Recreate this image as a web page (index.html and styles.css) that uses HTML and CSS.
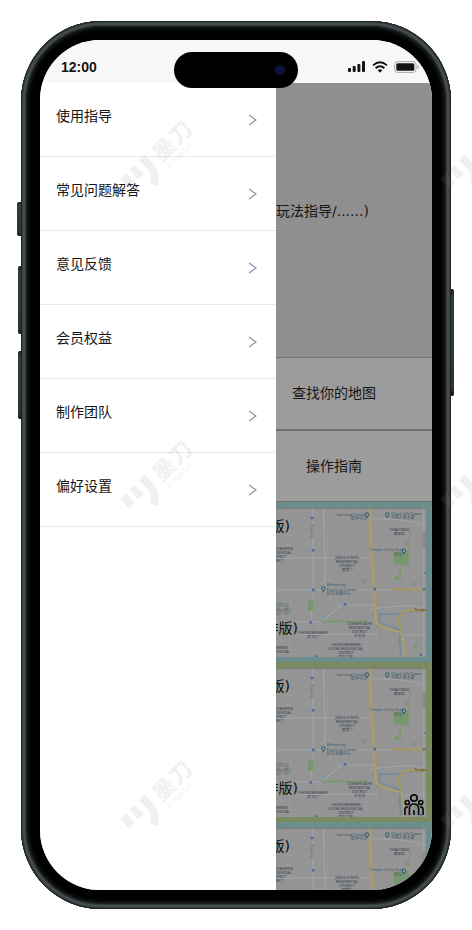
FILE: index.html
```html
<!DOCTYPE html>
<html lang="zh-CN">
<head>
<meta charset="utf-8">
<meta name="viewport" content="width=device-width, initial-scale=1">
<title>使用指导</title>
<link rel="stylesheet" href="styles.css">
</head>
<body>
<svg class="defs" aria-hidden="true">
  <defs>
    <symbol id="chevron" viewBox="0 0 9 12"><path d="M1 1l7 5-7 5" fill="none" stroke="#8496a6" stroke-width="1.2"/></symbol>
    <symbol id="pin" viewBox="0 0 14 19"><path d="M7 0a7 7 0 0 0-7 7c0 5 5 6 7 12 2-6 7-7 7-12a7 7 0 0 0-7-7z" fill="#40687c"/><circle cx="7" cy="7" r="3" fill="#a3aaad"/></symbol>
    <symbol id="map" viewBox="18 38 450 448">
      <rect x="18" y="38" width="450" height="448" fill="#949494"/>
      <path d="M18 38h450v3H18z" fill="#7d7d7d"/>
      <g fill="none" stroke="#9c9c9f" stroke-width="2">
        <path d="M58 40v446M88 40l6 446M175 60l-8 180M220 40v140M250 100v180M266 40v60M18 120h110M128 98h175M18 150h112M18 240h112M130 222h90M18 330h207M225 310h90M250 245h60M180 250v70M202 240v90M345 40v180M372 90h90M385 210h80M350 240h115M430 60v150M325 110h70M340 322h60M345 290v120M420 290v60M18 440h300M145 380v106M180 390v96M260 400v86M290 430v56M320 400v86M60 395v90M415 420h53M430 400v86M345 435h45M18 465h100M410 465h58"/>
      </g>
      <g fill="none" stroke="#a2a2a6" stroke-width="4">
        <path d="M127 40l3 250-8 100M18 188h286M18 284h350M155 380l45-38q12-12 25-12h90M145 380H18M310 70q80-2 158 18M160 40l6 230M462 40v446M300 345q90-20 168-8M18 418h305M400 420h68"/>
      </g>
      <path d="M325 358q20-10 60 8 30 25-4 80l-14 20" fill="none" stroke="#829080" stroke-width="2"/>
      <g fill="#789770">
        <path d="M372 172l45-6v42l-22 5-23-8zM408 140l10-2v16l-10-3zM386 222l9-3-2 22-5-2zM375 242l20 6v7l-22-2zM427 262l16 2-2 6h-14zM279 252h9v12h-9zM113 315l17-2v34h-16zM432 449h9v12h-9zM153 376h140v6H158zM54 340h6v16h-6z"/>
      </g>
      <g fill="none" stroke="#6e8ba2" stroke-width="5" stroke-linejoin="round"><path d="M329 380v-22q55 2 100-10l39-2M328 382l55 20q10 8 6 34l4 46"/></g>
      <circle cx="380" cy="206" r="4" fill="#6995ad"/>
      <g fill="none" stroke="#a8965a" stroke-width="6" stroke-linejoin="round">
        <path d="M301 40q0 120 9 200 2 80 9 140 5 12 25 18l48 14q9 6 9 74M468 346h-44q-34 2-37 26 0 18 6 40M367 282h97"/>
      </g>
      <g fill="none" stroke="#b8a466" stroke-width="3"><path d="M301 40q0 120 9 200 2 80 9 140 5 12 25 18l48 14q9 6 9 74"/></g>
      <g fill="#466f9e">
        <path d="M122 64h8v8h-8zM125 161h8v8h-8zM126 280h8v8h-8zM221 324h8v8h-8zM118 378h8v8h-8zM310 278h8v8h-8zM459 279h7v7h-7zM462 231h5v5h-5zM136 481h8v5h-8zM450 477h7v7h-7z"/>
      </g>
      <path d="M157 360h11v10h-11z" fill="#62a0b4"/>
      <use href="#pin" x="284" y="51" width="14" height="19"/>
      <use href="#pin" x="345" y="51" width="14" height="19"/>
      <use href="#pin" x="395" y="160" width="14" height="19"/>
      <use href="#pin" x="153" y="273" width="14" height="19"/>
      <g class="map-place">
        <text x="200" y="61">Kaiheng Center</text><text x="243" y="73">凯恒中心</text>
        <text x="363" y="60">China Life Tower</text><text x="363" y="72">中国人寿大厦</text>
        <text x="298" y="168">Temple of the Sun</text><text x="372" y="181">日坛</text>
        <text x="170" y="274">Minsheng</text><text x="170" y="287">Financial Center</text><text x="170" y="299">民生金融中心</text>
      </g>
      <g class="map-area">
        <text x="389" y="106">CHAOYANG</text><text x="388" y="118">朝阳区</text>
        <text x="231" y="192">JIANGUOMEN</text><text x="231" y="204">RESIDENTIAL</text><text x="231" y="216">DISTRICT</text><text x="231" y="228">建国门</text>
        <text x="30" y="165">CHAOYANMEN</text><text x="30" y="177">RESIDENTIAL</text><text x="26" y="189">DISTRICT</text><text x="22" y="201">朝阳门</text>
        <text x="128" y="417">CHONGWENMEN</text><text x="128" y="430">崇文门</text>
        <text x="269" y="391">DONGHUASHI</text><text x="269" y="403">RESIDENTIAL</text><text x="269" y="415">DISTRICT</text><text x="269" y="427">东花市</text>
        <text x="227" y="453">CHONGWENMEN</text><text x="227" y="465">OUTER RESIDENTIAL</text><text x="227" y="477">DISTRICT</text><text x="227" y="489">崇文门外</text>
        <text x="26" y="463">QIANMEN</text><text x="26" y="475">RESIDENTIAL</text>
      </g>
      <text class="map-road" x="434" y="349">Tonghui</text>
      <text class="map-street" transform="translate(124 85) rotate(90)">Chaoyang</text>
      <text class="map-street" transform="translate(460 110) rotate(90)">Dongdaqiao</text>
      <text class="map-city" x="56" y="336">Beijing</text><text class="map-city" x="56" y="356">北京市</text>
    </symbol>
    <pattern id="watermark" width="320" height="320" patternUnits="userSpaceOnUse">
      <g transform="translate(0 100)" fill="#808080">
        <path transform="scale(.33333)" d="M361 236l17-16 27 27-18 18zM388 209l16-14 28 26-17 17zM416 181l17-17 24 24q28 29 14 71l-21-8q9-29-11-48z"/>
        <g transform="translate(163 50) rotate(-45)"><text class="wm-name" x="-10" y="8">墨</text><text class="wm-name" x="14" y="8">刀</text></g>
        <text class="wm-site" transform="translate(169 69) rotate(-43)">MODAO.CC</text>
      </g>
    </pattern>
  </defs>
</svg>

<div class="phone">
  <span class="key key-action"></span>
  <span class="key key-up"></span>
  <span class="key key-down"></span>
  <span class="key key-power"></span>

  <div class="screen">
    <header class="status">
      <span class="time">12:00</span>
      <svg width="18" height="11" viewBox="0 0 18 11" fill="#141414" aria-hidden="true"><rect x="0" y="7" width="3" height="4" rx="1"/><rect x="4.700" y="5" width="3" height="6" rx="1"/><rect x="9.400" y="3" width="3" height="8" rx="1"/><rect x="14" y="0" width="3" height="11" rx="1"/></svg>
      <svg width="16" height="12" viewBox="0 0 16 12" fill="none" stroke="#141414" stroke-width="1.9" aria-hidden="true"><path d="M1 4.400q7-6.200 14 0M3.600 7.200q4.400-4 8.800 0"/><path d="M5.700 9.300Q8 7.300 10.300 9.300L8 11.700z" fill="#141414" stroke="none"/></svg>
      <svg width="25" height="12" viewBox="0 0 25 12" aria-hidden="true"><rect x=".6" y=".6" width="21.500" height="10.800" rx="3" fill="none" stroke="#a8a8a8"/><rect x="2.300" y="2.300" width="18" height="7.400" rx="1.500" fill="#141414"/><path d="M23.500 4v4q1.300-.6 1.300-2t-1.300-2z" fill="#a8a8a8"/></svg>
    </header>

    <div class="stage">
      <main class="page">
        <section class="hero"><p>玩法指导/......)</p></section>
        <div class="actions">
          <button type="button">查找你的地图</button>
          <button type="button">操作指南</button>
        </div>
        <article class="card teal">
          <svg class="map" aria-hidden="true"><use href="#map"/></svg>
          <div class="captions"><span>版)</span><span class="wide">作版)</span></div>
        </article>
        <article class="card green">
          <svg class="map" aria-hidden="true"><use href="#map"/></svg>
          <div class="captions"><span>版)</span><span class="wide">作版)</span></div>
          <svg class="people" viewBox="0 0 20 21" fill="none" stroke="#0c0c0c" stroke-width="1.7" aria-hidden="true"><circle cx="10" cy="4" r="3.200"/><circle cx="3.200" cy="8.500" r="2"/><circle cx="16.800" cy="8.500" r="2"/><path d="M5.400 21v-6.500Q5.400 10 10 10t4.600 4.500V21M10 16v5M.9 21v-5.500Q.9 13 3.800 12.800M19.100 21v-5.500Q19.100 13 16.200 12.800"/></svg>
        </article>
        <article class="card teal">
          <svg class="map" aria-hidden="true"><use href="#map"/></svg>
          <div class="captions"><span>版)</span></div>
        </article>
      </main>

      <nav class="drawer">
        <a href="#"><span>使用指导</span><svg><use href="#chevron"/></svg></a>
        <a href="#"><span>常见问题解答</span><svg><use href="#chevron"/></svg></a>
        <a href="#"><span>意见反馈</span><svg><use href="#chevron"/></svg></a>
        <a href="#"><span>会员权益</span><svg><use href="#chevron"/></svg></a>
        <a href="#"><span>制作团队</span><svg><use href="#chevron"/></svg></a>
        <a href="#"><span>偏好设置</span><svg><use href="#chevron"/></svg></a>
      </nav>
    </div>
    <div class="island"><span class="camera"></span></div>
  </div>
</div>

<svg class="watermark" aria-hidden="true"><rect width="100%" height="100%" fill="url(#watermark)"/></svg>
</body>
</html>
```

FILE: styles.css
```css
* { box-sizing: border-box; }

body {
  margin: 0;
  padding: 21px;
  background: #fff;
  color: #161616;
  font: 14px/20px "DejaVu Sans", "Noto Sans CJK SC", sans-serif;
}

p { margin: 0; }

.defs {
  position: absolute;
  width: 0;
  height: 0;
}

/* Device frame */
.phone {
  position: relative;
  height: calc(100vh - 42px);
  padding: 19px;
  border-radius: 80px;
  background: #000;
  box-shadow:
    inset 0 0 0 1px #202526,
    inset 0 0 0 2px #394042,
    inset 0 0 0 4px #454d4f,
    inset 0 0 0 5px #343a3c,
    inset 0 0 0 6px #1c2021,
    inset 0 0 3px 8px #151718;
}

.key {
  position: absolute;
  left: -3px;
  width: 3px;
  border-radius: 2px 0 0 2px;
  background: linear-gradient(#15191a, #343b3d 8%, #2c3233 92%, #101212);
}

.key-action { left: -4px; width: 4px; top: 181px; height: 34px; }
.key-up { top: 245px; height: 68px; }
.key-down { top: 330px; height: 68px; }
.key-power { left: auto; right: -3px; top: 268px; height: 107px; border-radius: 0 2px 2px 0; }

.screen {
  position: relative;
  display: flex;
  flex-direction: column;
  height: 100%;
  overflow: hidden;
  border-radius: 60px;
  background: #fff;
}

/* Status bar */
.status {
  display: flex;
  flex: none;
  align-items: center;
  gap: 6px;
  height: 43px;
  padding: 10px 13px 0 21px;
  background: #f7f7f7;
}

.time {
  margin-right: auto;
  font: bold 14px/20px "Liberation Sans", sans-serif;
}

.island {
  position: absolute;
  top: 12px;
  left: 50%;
  display: flex;
  align-items: center;
  justify-content: flex-end;
  width: 124px;
  height: 36px;
  padding-right: 12px;
  border-radius: 18px;
  background: #000;
  transform: translateX(-50%);
}

.camera {
  width: 12px;
  height: 12px;
  border-radius: 50%;
  background: radial-gradient(circle, #080c50 0 12%, #11163f 38%, #080a20 60%, #0c080d 75%);
}

/* Page behind the drawer, in its dimmed state */
.stage {
  position: relative;
  flex: 1;
  min-height: 0;
  overflow: hidden;
}

.hero {
  display: flex;
  align-items: center;
  height: 274px;
  padding: 0 0 18px 236px;
  background: #8f8f8f;
}

.actions {
  display: grid;
  grid-auto-rows: 1fr;
  height: 145px;
  background: #9c9c9c;
}

.actions button {
  padding: 0 0 0 50%;
  border: 1px solid #707070;
  border-width: 1px 0;
  background: #9c9c9c;
  color: #161616;
  font: inherit;
}

.card {
  position: relative;
  display: flex;
  justify-content: flex-end;
  height: 160px;
  padding: 6px 6px 5px;
}

.teal { background: #6b8e8c; }
.green { background: #7b8a60; }

.map {
  width: 150px;
  height: 149px;
}

.captions {
  position: absolute;
  inset: 14px auto 24px 0;
  display: flex;
  flex-direction: column;
  justify-content: space-between;
  width: 250px;
  color: #0c0c0c;
  text-align: right;
}

.captions .wide { margin-right: -8px; }

.people {
  position: absolute;
  right: 8px;
  bottom: 7px;
  width: 20px;
  height: 21px;
}

.map-place { fill: #3c566b; font: 12px "Noto Sans", "Noto Sans CJK SC", sans-serif; }
.map-area { fill: #363e50; font: 11px "Noto Sans", "Noto Sans CJK SC", sans-serif; text-anchor: middle; }
.map-road { fill: #7b5b2c; font: bold 11px "Noto Sans", sans-serif; }
.map-street { fill: #606060; font: 9px "Noto Sans", sans-serif; }
.map-city { fill: #6c6c6c; font: 20px "Noto Sans", "Noto Sans CJK SC", sans-serif; text-anchor: end; }

/* Drawer */
.drawer {
  position: absolute;
  inset: 0 auto 0 0;
  width: 236px;
  background: #fff;
}

.drawer a {
  display: flex;
  align-items: center;
  justify-content: space-between;
  height: 74px;
  padding: 0 19px 0 16px;
  border-bottom: 1px solid #e9e9e9;
  color: inherit;
  text-decoration: none;
}

.drawer span { margin-bottom: 8px; }

.drawer svg {
  width: 9px;
  height: 12px;
}

.watermark {
  position: fixed;
  inset: 0;
  width: 100%;
  height: 100%;
  opacity: .12;
  pointer-events: none;
}

.wm-name { font: bold 22px "Noto Sans CJK SC", sans-serif; }
.wm-site { font: 7px "Noto Sans", sans-serif; }
```
